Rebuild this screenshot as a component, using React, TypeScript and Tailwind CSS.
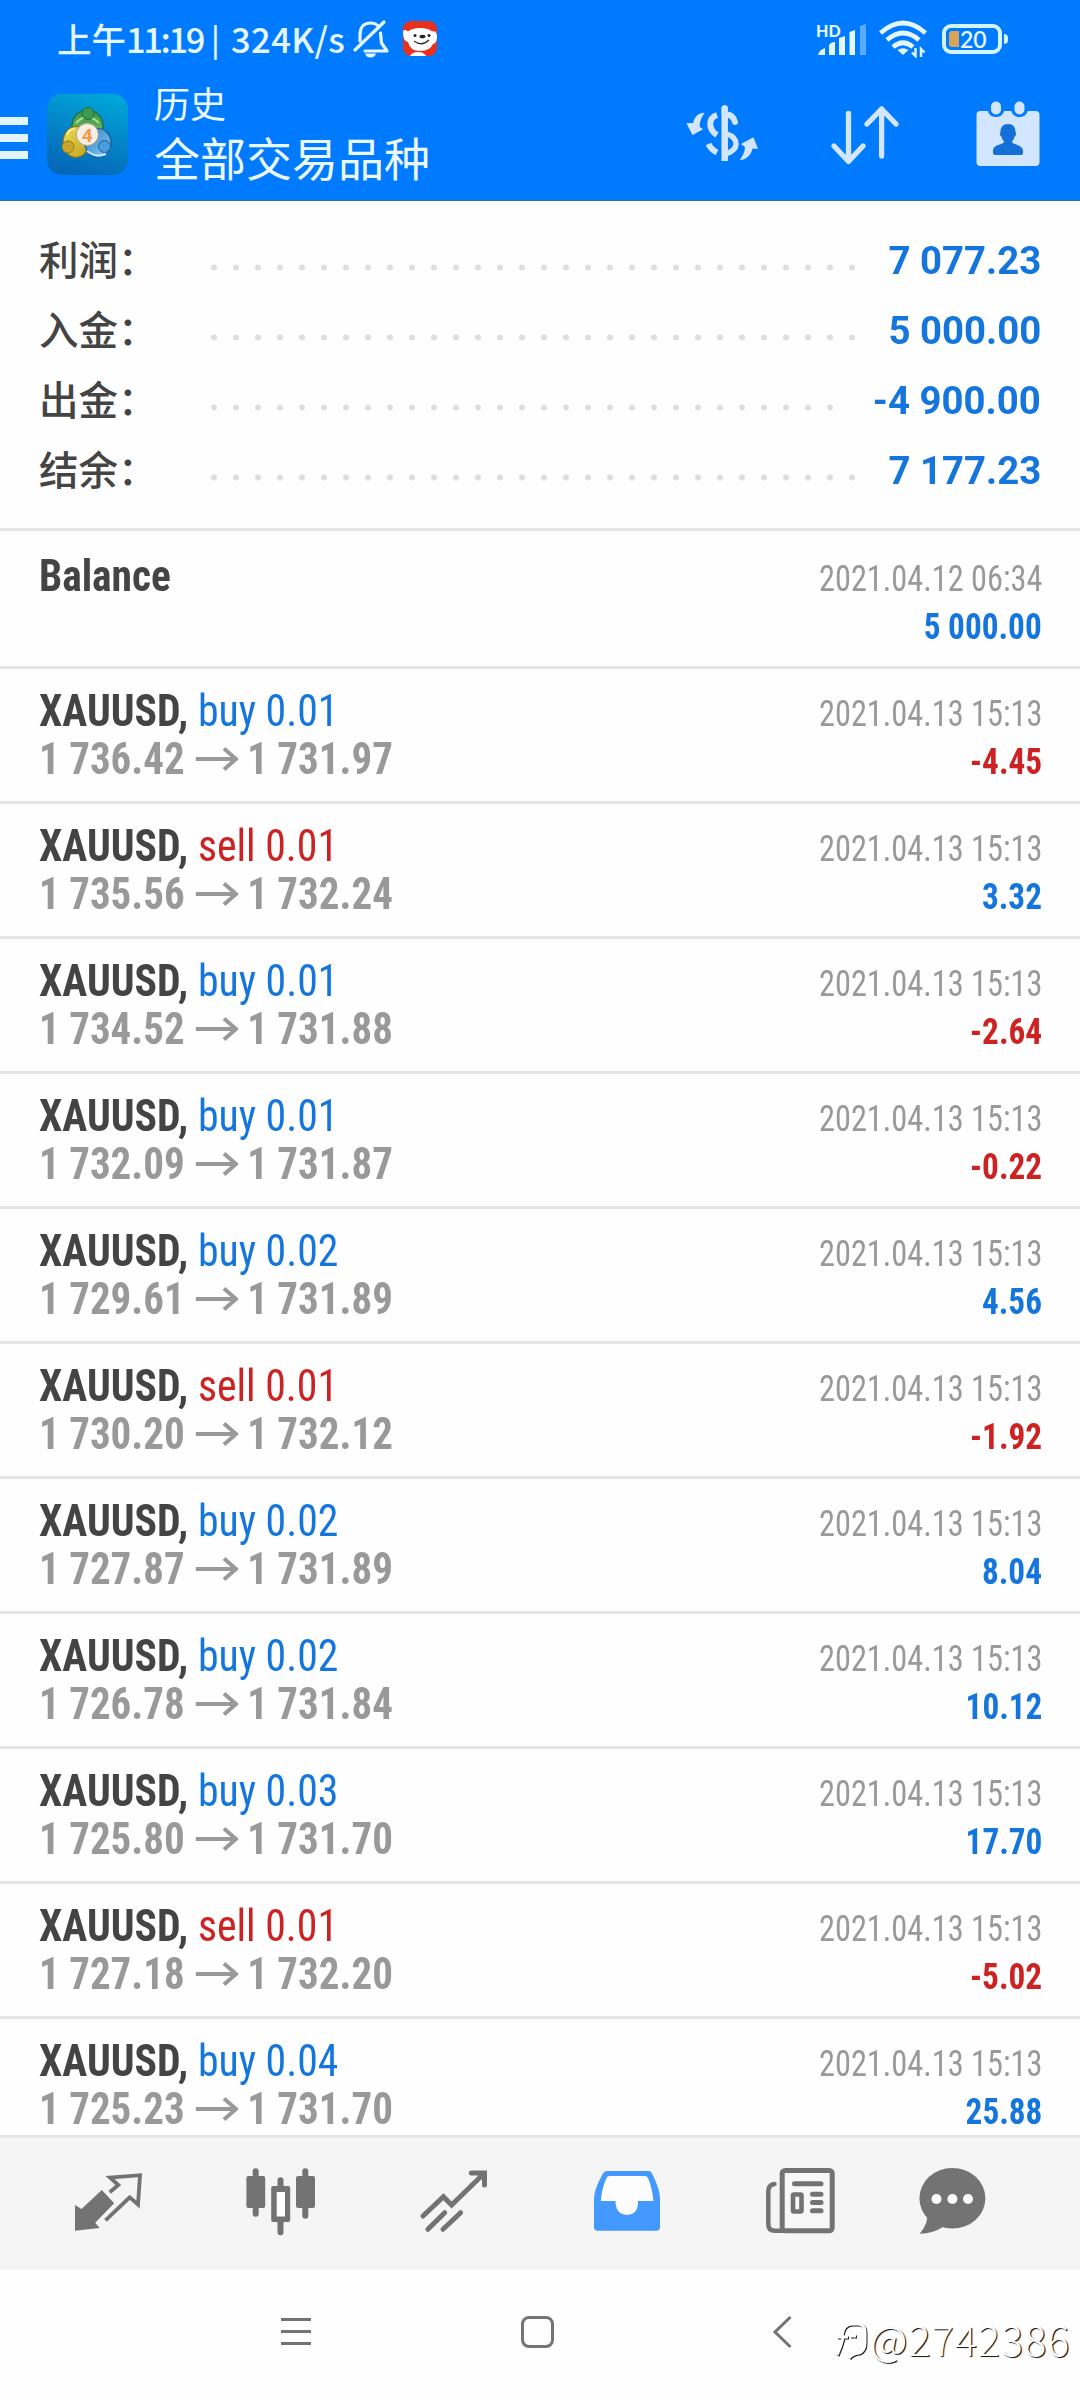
import React from "react";

const SANS = "font-['Roboto','Noto_Sans_CJK_SC',sans-serif]";
const COND = "font-['Roboto','Noto_Sans_CJK_SC',sans-serif] [font-stretch:75%]";

const summary = [
  { label: "利润", value: "7 077.23", dots: "w-[660px]" },
  { label: "入金", value: "5 000.00", dots: "w-[660px]" },
  { label: "出金", value: "-4 900.00", dots: "w-[638px]" },
  { label: "结余", value: "7 177.23", dots: "w-[660px]" },
];

const deals = [
  { side: "buy", lot: "0.01", open: "1 736.42", close: "1 731.97", profit: "-4.45" },
  { side: "sell", lot: "0.01", open: "1 735.56", close: "1 732.24", profit: "3.32" },
  { side: "buy", lot: "0.01", open: "1 734.52", close: "1 731.88", profit: "-2.64" },
  { side: "buy", lot: "0.01", open: "1 732.09", close: "1 731.87", profit: "-0.22" },
  { side: "buy", lot: "0.02", open: "1 729.61", close: "1 731.89", profit: "4.56" },
  { side: "sell", lot: "0.01", open: "1 730.20", close: "1 732.12", profit: "-1.92" },
  { side: "buy", lot: "0.02", open: "1 727.87", close: "1 731.89", profit: "8.04" },
  { side: "buy", lot: "0.02", open: "1 726.78", close: "1 731.84", profit: "10.12" },
  { side: "buy", lot: "0.03", open: "1 725.80", close: "1 731.70", profit: "17.70" },
  { side: "sell", lot: "0.01", open: "1 727.18", close: "1 732.20", profit: "-5.02" },
  { side: "buy", lot: "0.04", open: "1 725.23", close: "1 731.70", profit: "25.88" },
];

function StatusBar() {
  return (
    <div className="flex h-[78px] items-center pl-[57px] text-[#e4f6ff]">
      <div className="-mt-px flex w-[291px] whitespace-nowrap font-['Noto_Sans_CJK_SC',sans-serif] text-[34.5px] font-medium leading-none">
        <span className="w-[154px]">
          上午<span className="tracking-[-2.4px]">11:19</span>
        </span>
        <span className="w-[20px] text-[31px] leading-[34px]">|</span>
        <span className="tracking-[0.4px]">324K/s</span>
      </div>
      <svg className="ml-[4px] h-[40px] w-[38px]" viewBox="0 0 38 40" fill="none" stroke="currentColor" strokeWidth="3.2" strokeLinecap="round" strokeLinejoin="round">
        <path d="M8 22V16C8 8 12 4 18 4C22 4 25 5 27 8" />
        <path d="M28.500 14L29.500 24L35 32H13" />
        <path d="M32 3L3 31" />
        <path d="M13 34.500H24Q23 38.500 18.500 38.500Q14 38.500 13 34.500Z" fill="currentColor" stroke="none" />
      </svg>
      <svg className="ml-[12px] h-9 w-9" viewBox="0 0 36 36">
        <rect x="1" y="0" width="34" height="35" rx="8" fill="#e8301f" />
        <path d="M1 10Q3 8 6 10.500Q10 7 18 7Q27 7 30 10.500Q35 9 35 16Q35 22 31 23Q28 30 18 30Q8 30 6 21Q1 21 1 10Z" fill="#fff" />
        <path d="M8 35Q10 31 16 31Q22 31 24 35Z" fill="#fff" />
        <circle cx="13" cy="14.500" r="1.500" fill="#222" />
        <circle cx="27" cy="14.500" r="1.500" fill="#222" />
        <ellipse cx="20.500" cy="15.500" rx="3" ry="1.800" fill="#222" />
        <path d="M12 20Q20 26 27 19" stroke="#333" strokeWidth="1.300" fill="none" />
      </svg>
      <div className="ml-[378px] flex h-[36px] items-start">
        <span className="mt-[2px] w-[24px] whitespace-nowrap font-['Lato',sans-serif] text-[16px] font-black leading-[16px]">HD</span>
        <svg className="-ml-[24px] h-[36px] w-[54px]" viewBox="0 0 54 36" fill="currentColor">
          <path d="M2 34Q3 29 9 27V34Z" />
          <path d="M13 24Q15 21 19 21V34H13Z" />
          <path d="M23 17L29 15V34H23Z" />
          <path d="M33.500 11L39 9V34H33.500Z" />
          <path d="M44 5L50 3V34H44Z" opacity=".4" />
        </svg>
      </div>
      <svg className="ml-[9px] h-[38px] w-[48px]" viewBox="0 0 48 38" fill="none" stroke="currentColor" strokeWidth="4.600">
        <path d="M1.500 13Q24 -7 46.500 13" />
        <path d="M8 20Q24 6 40 20" />
        <path d="M14 27Q24 18.500 34 27" />
        <path d="M24 35L18.500 30Q24 26.500 29.500 30Z" fill="currentColor" stroke="none" />
        <path d="M36.500 28V36L33 32.500M42 37V29L45.500 32.500" strokeWidth="2.400" />
      </svg>
      <div className="ml-[15px] flex h-[30px] w-[60px] items-center rounded-[9px] border-4 border-[#d3f3ff] pl-[3px]">
        <div className="h-[16px] w-[10px] rounded-l-[3px] bg-[#d9a555]" />
        <span className="ml-px font-['Lato',sans-serif] text-[23px] font-semibold leading-none">20</span>
      </div>
      <div className="ml-[2px] h-[10px] w-[4px] rounded-r bg-[#d3f3ff]" />
    </div>
  );
}

function AppLogo() {
  return (
    <svg className="ml-[18px] h-[84px] w-[84px]" viewBox="0 0 84 84">
      <defs>
        <linearGradient id="tile" x1="0.700" y1="0" x2="0.400" y2="1">
          <stop offset="0" stopColor="#00a6d8" />
          <stop offset="0.500" stopColor="#0484c8" />
          <stop offset="1" stopColor="#0567b8" />
        </linearGradient>
        <linearGradient id="green" x1="0" y1="0" x2="0" y2="1">
          <stop offset="0" stopColor="#35904a" />
          <stop offset="1" stopColor="#7fca62" />
        </linearGradient>
        <linearGradient id="gold" x1="0" y1="0" x2="1" y2="1">
          <stop offset="0" stopColor="#efdf50" />
          <stop offset="1" stopColor="#bda022" />
        </linearGradient>
        <linearGradient id="sky" x1="0" y1="0" x2="1" y2="1">
          <stop offset="0" stopColor="#2b7fc6" />
          <stop offset="1" stopColor="#8ccdf5" />
        </linearGradient>
      </defs>
      <rect x="1" y="1" width="81" height="81" rx="15" fill="url(#tile)" />
      <ellipse cx="41.500" cy="33" rx="15.500" ry="16" fill="url(#green)" stroke="#1f6b3c" strokeWidth="1.200" />
      <path d="M30 30Q41 18 53 30" stroke="#a9dc90" strokeWidth="2" fill="none" />
      <ellipse cx="30" cy="49" rx="13" ry="15.500" fill="url(#gold)" stroke="#7f7020" strokeWidth="1.200" />
      <path d="M21 42Q22 36 29 36" stroke="#f8f0a0" strokeWidth="2" fill="none" />
      <ellipse cx="52" cy="50" rx="13" ry="14.500" fill="url(#sky)" stroke="#1c5f9c" strokeWidth="1.200" />
      <path d="M41 58Q50 65 60 61" stroke="#bfe6ff" strokeWidth="2" fill="none" />
      <circle cx="42" cy="20.500" r="6" fill="#3c9a50" stroke="#1f6b3c" />
      <circle cx="22" cy="54" r="6" fill="#c9a52a" stroke="#8f7c20" />
      <circle cx="58.500" cy="53.500" r="6" fill="#4a9ade" stroke="#1c5f9c" />
      <circle cx="41.300" cy="41.500" r="11" fill="#f7efe6" stroke="#b9a58c" />
      <text x="41.300" y="48.500" textAnchor="middle" fontFamily="Roboto, sans-serif" fontWeight="700" fontSize="19" fill="#f09a4e">4</text>
    </svg>
  );
}

function TitleBar() {
  return (
    <div className="flex h-[120px] items-start text-[#d2e7ff]">
      <div className="mt-[39px] flex w-[28px] flex-col gap-[9px]">
        <div className="h-[8px] bg-[#e2f5ff]" />
        <div className="h-[8px] bg-[#e2f5ff]" />
        <div className="h-[8px] bg-[#e2f5ff]" />
      </div>
      <div className="mt-[15px]"><AppLogo /></div>
      <div className="ml-[24px] flex w-[530px] flex-col font-['Noto_Sans_CJK_SC',sans-serif] text-[#eaf8ff]">
        <span className="mt-[4px] text-[36px] font-normal leading-[40px]">历史</span>
        <span className="mt-[9px] text-[46px] font-normal leading-[50px]">全部交易品种</span>
      </div>
      <svg className="mt-[23px] h-[64px] w-[76px]" viewBox="0 0 76 64" fill="none" stroke="currentColor" strokeWidth="6">
        <path d="M40.700 6V60" strokeWidth="6.500" />
        <path d="M40.700 7V12" strokeLinecap="round" />
        <path d="M33 14C24 17 24 28 33 34" />
        <path d="M24.500 43Q27 48.500 33 51.500" />
        <path d="M43 13.500Q49 14 51 21" strokeLinecap="round" />
        <path d="M43 33Q52 36 52 43Q52 49 43 52.500" strokeWidth="5.500" />
        <path d="M20.600 11.700C13 12 10 17 9.200 22L2.400 22.300L8.500 34L19.200 28.300L15.800 26C15.500 20 18 16 20.600 11.700Z" fill="currentColor" stroke="none" />
        <path d="M55.700 59C63 59 67.500 53 68.500 47.500L74 48L69.500 36.300L57 43L61 46C61 51 58.500 55 55.700 59Z" fill="currentColor" stroke="none" />
      </svg>
      <svg className="ml-[70px] mt-[23px] h-[68px] w-[70px]" viewBox="0 0 70 68" fill="none" stroke="currentColor" strokeWidth="5.300" strokeLinecap="round" strokeLinejoin="round">
        <path d="M18.500 12.500V60M4 45L18.500 60.500L33 45" />
        <path d="M51.600 55V8M37 23L51.600 8L66 23" />
      </svg>
      <svg className="ml-[72px] mt-[21px] h-[72px] w-[72px]" viewBox="0 0 72 72" fill="currentColor">
        <rect x="4.500" y="12" width="63" height="55" rx="4" />
        <rect x="15.500" y="0" width="17" height="18" rx="8" fill="#027bff" />
        <rect x="39" y="0" width="17" height="18" rx="8" fill="#027bff" />
        <rect x="19" y="2.500" width="10" height="13" rx="5" />
        <rect x="42.500" y="2.500" width="10" height="13" rx="5" />
        <path d="M36 25C41 25 43.500 28 43.500 33C44.500 33.500 44 37 42.500 37.500C42 40 41 41.500 40 42.500C40 46 51 45 51 52V54Q51 56 49 56H23Q21 56 21 54V52C21 45 32 46 32 42.500C31 41.500 30 40 29.500 37.500C28 37 27.500 33.500 28.500 33C28.500 28 31 25 36 25Z" fill="#1470d8" />
      </svg>
    </div>
  );
}

function Summary() {
  return (
    <div className="h-[327px] pt-[23px]">
      {summary.map((r) => (
        <div key={r.label} className={`flex h-[70px] items-center pl-[39px] pr-[39px] ${SANS}`}>
          <span className="-mt-[3px] w-[172px] font-['Noto_Sans_CJK_SC',sans-serif] text-[39.500px] font-medium leading-none text-[#444]">
            {r.label}：
          </span>
          <div className={`mt-[17px] h-[7px] bg-[radial-gradient(circle_at_3px_3.5px,#dedede_2.6px,transparent_3.4px)] bg-[length:22px_7px] ${r.dots}`} />
          <span className="ml-auto mt-[3px] origin-right scale-x-[.972] whitespace-nowrap text-[39.500px] font-bold leading-none text-[#1476dc]">{r.value}</span>
        </div>
      ))}
    </div>
  );
}

function LongArrow() {
  return (
    <svg className="ml-[12px] mr-[9px] h-[24px] w-[46px]" viewBox="0 0 43 24" preserveAspectRatio="none" fill="none" stroke="#999" strokeWidth="4">
      <path d="M0 12H40M28.500 1.500L40.500 12L28.500 22.500" />
    </svg>
  );
}

function Stamp({ time, value }: { time: string; value: string }) {
  return (
    <div className="flex flex-col items-end whitespace-nowrap">
      <span className="origin-right scale-x-[.885] text-[36.500px] leading-[52px] text-[#999]">{time}</span>
      <span
        className={`origin-right scale-x-[.91] text-[36.500px] font-bold leading-[44px] ${value.startsWith("-") ? "text-[#cc2222]" : "text-[#1476dc]"}`}
      >
        {value}
      </span>
    </div>
  );
}

function History() {
  return (
    <div className={`h-[1607px] overflow-hidden ${COND}`}>
      <div className="flex h-[138px] justify-between border-t-[3px] border-[#e5e5e5] pl-[39px] pr-[38px] pt-[22px]">
        <span className="-mt-px origin-left scale-x-[.94] text-[44px] font-bold leading-[48px] text-[#444]">Balance</span>
        <Stamp time="2021.04.12 06:34" value="5 000.00" />
      </div>
      {deals.map((d) => (
        <div key={d.open} className="flex h-[135px] justify-between border-t-[3px] border-[#e5e5e5] pl-[39px] pr-[38px] pt-[19px]">
          <div className="-mt-px flex flex-col items-start whitespace-nowrap text-[44px] leading-[48px]">
            <span className="origin-left scale-x-[.948]">
              <b className="font-bold text-[#444]">XAUUSD,</b>{" "}
              <span className={d.side === "buy" ? "text-[#1476dc]" : "text-[#cc2222]"}>
                {d.side} {d.lot}
              </span>
            </span>
            <span className="flex origin-left scale-x-[.932] items-center font-bold text-[#999]">
              {d.open}
              <LongArrow />
              {d.close}
            </span>
          </div>
          <Stamp time="2021.04.13 15:13" value={d.profit} />
        </div>
      ))}
    </div>
  );
}

function TabBar() {
  const slot = "flex w-[173px] justify-center";
  const icon = "h-[72px] w-[72px]";
  return (
    <div className="flex h-[135px] border-t-[3px] border-[#e6e6e4] bg-[#f5f5f5] pl-[21px] pt-[27px] text-[#737373]">
      <div className={slot}>
        <svg className={icon} viewBox="0 0 72 72" fill="none" stroke="currentColor" strokeWidth="3.800">
          <path d="M3 65.700V40L9.500 44L29.800 25L42.200 38.300L23.200 57.700L27.700 63Z" fill="currentColor" stroke="none" />
          <path d="M37.700 27.300L46.300 20L38 12.500L68 10.200L66 39.500L57.700 32.300L33.500 55.300" />
        </svg>
      </div>
      <div className={slot}>
        <svg className={icon} viewBox="0 0 72 72" fill="currentColor">
          <rect x="7.700" y="3.300" width="6" height="48.500" rx="3" />
          <rect x="1.400" y="11" width="18.800" height="32" rx="2" />
          <rect x="32.500" y="12.300" width="6" height="58" rx="3" />
          <rect x="26.200" y="21" width="19" height="36" rx="2" />
          <rect x="31.700" y="27" width="8.300" height="24.500" fill="#fff" />
          <rect x="57.300" y="3.300" width="6" height="50.500" rx="3" />
          <rect x="51" y="11" width="19" height="32" rx="2" />
        </svg>
      </div>
      <div className={slot}>
        <svg className={icon} viewBox="0 0 72 72" fill="none" stroke="currentColor" strokeWidth="5">
          <path d="M5 51L25.400 31.700L33.600 40L66 8.500M53.300 8H66.500V20" strokeLinecap="round" />
          <path d="M26.700 47.700L9.900 64.300M42.600 47.700L25 64.300" strokeLinecap="round" />
        </svg>
      </div>
      <div className={slot}>
        <svg className={icon} viewBox="0 0 72 72">
          <path d="M15.600 6H58Q60 6 61 8.500Q69 24 69 34V62Q69 65.700 65.500 65.700H6.500Q3 65.700 3 62V34Q3 24 12 8.500Q13.500 6 15.600 6Z" fill="#4399fd" />
          <path d="M18 11H54Q56 11 57 13Q61 22 62.500 36H47V39Q46 50 36 50Q26 50 24.600 39V36H9.800Q11 22 15.500 13Q16.500 11 18 11Z" fill="#fdfdfd" />
        </svg>
      </div>
      <div className={slot}>
        <svg className={icon} viewBox="0 0 72 72" fill="none" stroke="currentColor" strokeWidth="5" strokeLinecap="round">
          <path d="M10.500 19Q4.300 20 4.300 26V59Q4.300 65.800 11 65.800H20" strokeWidth="4.500" />
          <rect x="18.200" y="5.500" width="50" height="60.300" rx="3" fill="#f8f8f8" />
          <path d="M30.500 18.700H57" />
          <rect x="29" y="29.500" width="8.500" height="17" rx="1" strokeWidth="4.600" fill="#f8f8f8" />
          <path d="M48.500 29.300H57M48.500 37.500H57M48.500 45.700H57" />
        </svg>
      </div>
      <div className="flex w-[133px] justify-center">
        <svg className={icon} viewBox="0 0 72 72" fill="currentColor">
          <ellipse cx="35.400" cy="33.300" rx="33" ry="30.300" />
          <path d="M10 50Q11 59 2.700 68.700Q16 68.500 26 62Z" />
          <circle cx="19.500" cy="34" r="5" fill="#fff" />
          <circle cx="35.400" cy="34" r="5" fill="#fff" />
          <circle cx="51" cy="34" r="5" fill="#fff" />
        </svg>
      </div>
    </div>
  );
}

function SystemNav() {
  return (
    <div className="flex h-[130px] items-start bg-[#fefefe] pl-[281px] pt-[46px] text-[#747474]">
      <div className="mt-[2px] flex w-[30px] flex-col gap-[9px]">
        <div className="h-[3px] bg-current" />
        <div className="h-[3px] bg-current" />
        <div className="h-[3px] bg-current" />
      </div>
      <div className="ml-[210px] h-[32px] w-[33px] rounded-[8px] border-[3px] border-current" />
      <svg className="ml-[217px] h-[34px] w-[22px]" viewBox="0 0 22 34" fill="none" stroke="currentColor" strokeWidth="3">
        <path d="M19.500 1L4 16L19.500 31" />
      </svg>
      <div className="ml-[41px] mt-px flex items-center text-white">
        <svg className="h-[42px] w-[36px] [filter:drop-shadow(1px_1px_0.5px_#222)]" viewBox="0 0 36 42" fill="none" stroke="#fff" strokeWidth="3">
          <path d="M3 38Q7 30 9 21M3 20H14M8 19Q9 7 18 7H24Q31 7 31 15V26Q31 34 25 36Q18 37 15 41M16 19H22" />
        </svg>
        <span className="whitespace-nowrap font-['Noto_Sans_CJK_SC',sans-serif] text-[41px] font-light leading-[42px] tracking-[1.2px] [text-shadow:1.2px_1.2px_0.8px_#111]">@2742386</span>
      </div>
    </div>
  );
}

export default function App() {
  return (
    <div className="flex h-[2400px] w-[1080px] flex-col overflow-hidden bg-[#fefefe]">
      <header className="h-[201px] border-b border-[#28719f] bg-[#007aff]">
        <StatusBar />
        <TitleBar />
      </header>
      <Summary />
      <History />
      <TabBar />
      <SystemNav />
    </div>
  );
}
